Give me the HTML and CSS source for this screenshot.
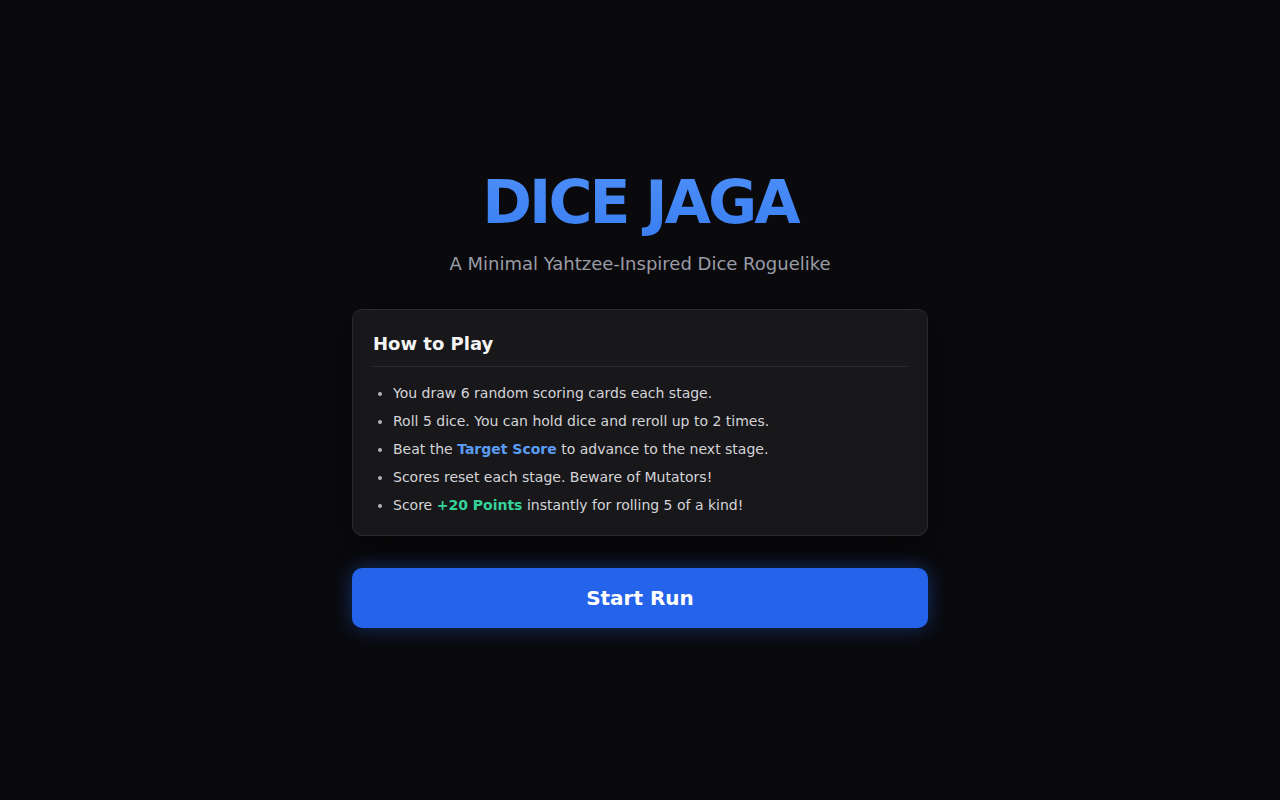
FILE: index.html
```html
<!DOCTYPE html>
<html lang="en">
<head>
<meta charset="utf-8">
<title>Dice Jaga</title>
<link rel="stylesheet" href="styles.css">
</head>
<body>
<main class="screen">
  <div class="panel">
    <h1 class="title">DICE JAGA</h1>
    <p class="subtitle">A Minimal Yahtzee-Inspired Dice Roguelike</p>
    <section class="card">
      <h2 class="card-title">How to Play</h2>
      <ul class="rules">
        <li>You draw 6 random scoring cards each stage.</li>
        <li>Roll 5 dice. You can hold dice and reroll up to 2 times.</li>
        <li>Beat the <strong class="hl-blue">Target Score</strong> to advance to the next stage.</li>
        <li>Scores reset each stage. Beware of Mutators!</li>
        <li>Score <strong class="hl-green">+20 Points</strong> instantly for rolling 5 of a kind!</li>
      </ul>
    </section>
    <button class="start-btn" type="button">Start Run</button>
  </div>
</main>
</body>
</html>
```

FILE: styles.css
```css
* { box-sizing: border-box; }

html, body {
  margin: 0;
  padding: 0;
  background: #0a0a0d;
}

body {
  font-family: "DejaVu Sans", "Liberation Sans", sans-serif;
  color: #e4e4e7;
}

.screen {
  min-height: 100vh;
  display: flex;
  align-items: center;
  justify-content: center;
}

.panel {
  width: 576px;
  display: flex;
  flex-direction: column;
  align-items: stretch;
  text-align: center;
  padding-bottom: 7px;
}

.title {
  margin: 0;
  font-size: 60px;
  line-height: 72px;
  font-weight: 700;
  letter-spacing: -3px;
  background: linear-gradient(180deg, #4d8ff8 0%, #3a7ef2 100%);
  -webkit-background-clip: text;
  background-clip: text;
  color: transparent;
}

.subtitle {
  margin: 12px 0 0;
  font-size: 18px;
  line-height: 27px;
  color: #9a9ca5;
}

.card {
  margin-top: 32px;
  background: #18181b;
  border: 1px solid #2a2a2f;
  border-radius: 10px;
  padding: 20px 20px 16px;
  text-align: left;
  box-shadow: 0 10px 30px rgba(0, 0, 0, 0.55);
}

.card-title {
  margin: 0;
  font-size: 18px;
  line-height: 27px;
  font-weight: 700;
  color: #f4f4f5;
  padding-bottom: 9px;
  border-bottom: 1px solid #2b2b30;
}

.rules {
  margin: 12px 0 0;
  padding: 0 0 0 20px;
  list-style: disc;
  color: #d4d4d8;
  font-size: 14px;
  line-height: 28px;
}

.rules li::marker {
  color: #b4b4bb;
}

.hl-blue {
  color: #5b9cf4;
  font-weight: 700;
}

.hl-green {
  color: #34d399;
  font-weight: 700;
}

.start-btn {
  margin-top: 32px;
  height: 60px;
  border: none;
  border-radius: 10px;
  background: #2563eb;
  color: #ffffff;
  font-family: "DejaVu Sans", "Liberation Sans", sans-serif;
  font-size: 20px;
  font-weight: 700;
  cursor: pointer;
  box-shadow: 0 0 20px rgba(37, 99, 235, 0.4);
}
```
